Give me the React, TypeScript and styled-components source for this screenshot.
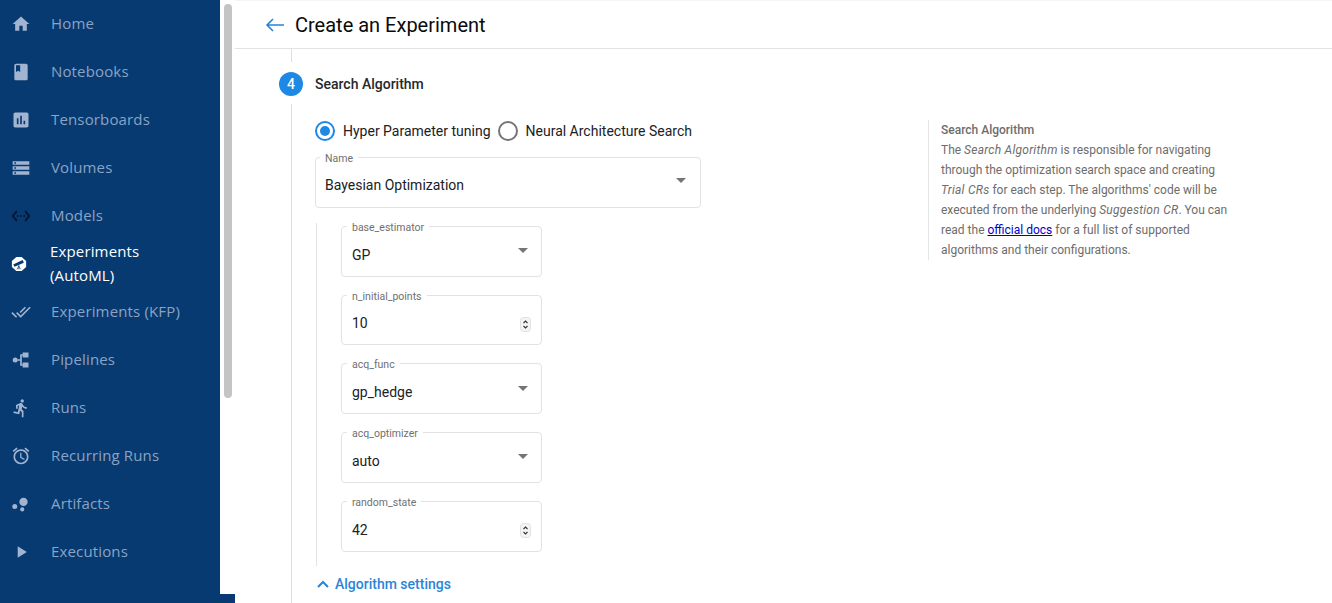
import React from "react";
import styled, { createGlobalStyle } from "styled-components";

const Global = createGlobalStyle`
  html, body { margin: 0; padding: 0; height: 603px; overflow: hidden; background: #fff; }
  #root { height: 603px; }
  * { box-sizing: border-box; }
`;

const Page = styled.div`
  display: grid;
  grid-template-columns: 220px 15px 1097px;
  grid-template-rows: 594px 9px;
  height: 603px;
  font-family: Roboto, "Liberation Sans", sans-serif;
`;

const Sidebar = styled.nav`
  grid-column: 1;
  grid-row: 1;
  background: #073a71;
  overflow: hidden;
  display: flex;
  flex-direction: column;
`;

const NavItem = styled.div<{ $active?: boolean }>`
  flex: none;
  height: 48px;
  display: flex;
  align-items: center;
  padding-left: 11px;
  gap: ${(p) => (p.$active ? "23px" : "20px")};
  font-family: "Open Sans", Roboto, sans-serif;
  font-size: 15px;
  font-weight: 500;
  line-height: 24px;
  letter-spacing: 0.15px;
  white-space: nowrap;
  color: ${(p) => (p.$active ? "#ffffff" : "#8ba3c4")};
`;

const NavLabel = styled.span`
  margin-top: -2px;
`;

const NavGlyph = styled.svg<{ $dark?: boolean }>`
  width: 20px;
  height: 20px;
  flex: none;
  fill: ${(p) => (p.$dark ? "#06122f" : "#a2b4cf")};
`;

const ActiveGlyph = styled.svg`
  width: 16px;
  height: 16px;
  flex: none;
`;

const ScrollTrack = styled.div`
  grid-column: 2;
  grid-row: 1;
  background: #fff;
  padding: 4px 3px 0 4px;
`;

const ScrollThumb = styled.div`
  height: 394px;
  background: #c4c4c4;
  border-radius: 4px;
`;

const Footer = styled.div`
  grid-column: 1 / 3;
  grid-row: 2;
  background: #073a71;
`;

const Main = styled.main`
  grid-column: 3;
  grid-row: 1 / 3;
  display: flex;
  flex-direction: column;
  min-width: 0;
  overflow: hidden;
`;

const Header = styled.header`
  flex: none;
  height: 49px;
  display: flex;
  align-items: center;
  gap: 10px;
  padding: 1px 0 0 30px;
  border-bottom: 1px solid #e3e3e3;
  border-top: 1px solid #f5f5f5;
`;

const BackArrow = styled.svg`
  width: 20px;
  height: 20px;
  fill: none;
  stroke: #2a83d8;
  stroke-width: 1.6;
`;

const Title = styled.h1`
  margin: 0;
  font-size: 20px;
  font-weight: 400;
  color: #0a0a0a;
  white-space: nowrap;
`;

const Step = styled.section`
  flex: 1;
  display: flex;
  padding-left: 44px;
  min-height: 0;
`;

const Rail = styled.div`
  flex: none;
  width: 24px;
  display: flex;
  flex-direction: column;
  align-items: center;
`;

const RailTop = styled.div`
  flex: none;
  width: 1px;
  height: 13px;
  background: #dedede;
  margin-bottom: 10px;
`;

const RailLine = styled.div`
  flex: 1;
  width: 1px;
  margin-top: 8px;
  background: #dedede;
`;

const StepNumber = styled.div`
  flex: none;
  width: 24px;
  height: 24px;
  border-radius: 50%;
  background: #1e88e5;
  color: #fff;
  font-size: 14px;
  font-weight: 500;
  display: flex;
  align-items: center;
  justify-content: center;
`;

const StepBody = styled.div`
  flex: 1;
  min-width: 0;
  margin-left: 12px;
  display: grid;
  grid-template-columns: 386px 300px;
  column-gap: 227px;
  align-content: start;
`;

const StepTitle = styled.h2`
  grid-column: 1 / 3;
  margin: 0;
  padding-top: 25px;
  height: 71px;
  font-size: 14px;
  line-height: 20px;
  font-weight: 500;
  color: #26282b;
`;

const FormColumn = styled.div`
  display: flex;
  flex-direction: column;
`;

const RadioRow = styled.div`
  display: flex;
  align-items: center;
  height: 22px;
  margin-bottom: 15px;
  white-space: nowrap;
`;

const RadioOption = styled.label`
  display: flex;
  align-items: center;
  gap: 8px;
  margin-right: 7px;
  font-size: 14px;
  color: #202124;
`;

const RadioMark = styled.span<{ $on?: boolean }>`
  flex: none;
  width: 20px;
  height: 20px;
  border-radius: 50%;
  border: 2px solid ${(p) => (p.$on ? "#1e88e5" : "#757575")};
  display: flex;
  align-items: center;
  justify-content: center;
  &::after {
    content: "";
    display: ${(p) => (p.$on ? "block" : "none")};
    width: 10px;
    height: 10px;
    border-radius: 50%;
    background: #1e88e5;
  }
`;

const Field = styled.div<{ $nested?: boolean }>`
  position: relative;
  flex: none;
  height: 50.75px;
  border: 1px solid #e2e2e2;
  border-radius: 4px;
  display: flex;
  align-items: center;
  justify-content: space-between;
  padding: ${(p) => (p.$nested ? "7px 10px 0 10px" : "5px 11px 0 9px")};
  font-size: 14px;
  color: #202124;
`;

const FieldLabel = styled.span<{ $nested?: boolean }>`
  position: absolute;
  left: ${(p) => (p.$nested ? "5px" : "4px")};
  top: -6px;
  padding: 0 5px;
  background: #fff;
  font-size: 10.5px;
  line-height: 13px;
  color: #6f6f6f;
`;

const Caret = styled.span`
  width: 0;
  height: 0;
  margin: -8px 3px 0 0;
  border-left: 5px solid transparent;
  border-right: 5px solid transparent;
  border-top: 5px solid #757575;
`;

const Spinner = styled.svg`
  width: 11px;
  height: 15px;
  margin: 2px 0 0 0;
  fill: none;
`;

const Nested = styled.div`
  margin: 15px 0 0 1px;
  border-left: 1px solid #e2e2e2;
  height: 343px;
  padding: 3px 0 0 24px;
  width: 226px;
  display: flex;
  flex-direction: column;
  gap: 18px;
`;

const Toggle = styled.div`
  display: flex;
  align-items: center;
  gap: 5px;
  margin-top: 9px;
  height: 18px;
  padding-left: 1px;
  font-size: 14px;
  font-weight: 500;
  color: #2a84d8;
`;

const Help = styled.aside`
  align-self: start;
  height: 140px;
  border-left: 1px solid #e4e4e4;
  padding-left: 12px;
  font-size: 12px;
  line-height: 20px;
  color: #6d6d6d;
  white-space: nowrap;
  em {
    letter-spacing: 0.25px;
  }
`;

const HelpTitle = styled.div`
  font-weight: 500;
`;

const DocLink = styled.a`
  color: #0000cc;
  text-decoration: underline;
`;

const icons: [string, string, boolean?][] = [
  ["Home", "M10 20v-6h4v6h5v-8h3L12 3 2 12h3v8z"],
  ["Notebooks", "M18 2H6c-1.1 0-2 .9-2 2v16c0 1.1.9 2 2 2h12c1.1 0 2-.9 2-2V4c0-1.1-.9-2-2-2zM6 4h5v8l-2.5-1.5L6 12V4z"],
  ["Tensorboards", "M19 3H5c-1.1 0-2 .9-2 2v14c0 1.1.9 2 2 2h14c1.1 0 2-.9 2-2V5c0-1.1-.9-2-2-2zM9 17H7v-7h2v7zm4 0h-2V7h2v10zm4 0h-2v-4h2v4z"],
  ["Volumes", "M2 20h20v-4H2v4zm2-3h2v2H4v-2zM2 4v4h20V4H2zm4 3H4V5h2v2zm-4 7h20v-4H2v4zm2-3h2v2H4v-2z"],
  ["Models", "M7.77 6.76L6.23 5.48.82 12l5.41 6.52 1.54-1.28L3.42 12l4.35-5.24zM7 13h2v-2H7v2zm10-2h-2v2h2v-2zm-6 2h2v-2h-2v2zm6.77-7.52l-1.54 1.28L20.58 12l-4.35 5.24 1.54 1.28L23.18 12l-5.41-6.52z", true],
];
const icons2: [string, string][] = [
  ["Experiments (KFP)", "M18 7l-1.41-1.41-6.34 6.34 1.41 1.41L18 7zm4.24-1.41L11.66 16.17 7.48 12l-1.41 1.41L11.66 19l12-12-1.42-1.41zM.41 13.41L6 19l1.41-1.41L1.83 12 .41 13.41z"],
  ["Pipelines", "M14 3h7v6h-7zM14 15h7v6h-7zM11 5h3v2h-1v10h1v2h-3v-6H8v-2h3zM2 12a3 3 0 1 0 6 0 3 3 0 0 0-6 0z"],
  ["Runs", "M13.49 5.48c1.1 0 2-.9 2-2s-.9-2-2-2-2 .9-2 2 .9 2 2 2zm-3.6 13.9l1-4.4 2.1 2v6h2v-7.5l-2.1-2 .6-3c1.3 1.5 3.3 2.5 5.5 2.5v-2c-1.9 0-3.5-1-4.3-2.4l-1-1.6c-.4-.6-1-1-1.7-1-.3 0-.5.1-.8.1l-5.2 2.2v4.7h2v-3.4l1.8-.7-1.6 8.1-4.9-1-.4 2 7 1.4z"],
  ["Recurring Runs", "M22 5.72l-4.6-3.86-1.29 1.53 4.6 3.86L22 5.72zM7.88 3.39L6.6 1.86 2 5.71l1.29 1.53 4.59-3.85zM12.5 8H11v6l4.75 2.85.75-1.23-4-2.37V8zM12 4c-4.97 0-9 4.03-9 9s4.02 9 9 9c4.97 0 9-4.03 9-9s-4.03-9-9-9zm0 16c-3.87 0-7-3.13-7-7s3.13-7 7-7 7 3.13 7 7-3.13 7-7 7z"],
  ["Artifacts", "M4.500 12a3 3 0 1 0 0 6 3 3 0 0 0 0-6zM15 4.500a5 5 0 1 0 0 10 5 5 0 0 0 0-10zM13.500 16a2.500 2.500 0 1 0 0 5 2.500 2.500 0 0 0 0-5z"],
  ["Executions", "M8 5v14l11-7z"],
];

const Nav = ({ label, d, dark }: { label: string; d: string; dark?: boolean }) => (
  <NavItem>
    <NavGlyph viewBox="0 0 24 24" $dark={dark}>
      <path d={d} />
    </NavGlyph>
    <NavLabel>{label}</NavLabel>
  </NavItem>
);

const Select = ({ label, value, nested }: { label: string; value: string; nested?: boolean }) => (
  <Field $nested={nested}>
    <FieldLabel $nested={nested}>{label}</FieldLabel>
    <span>{value}</span>
    <Caret />
  </Field>
);

const NumberInput = ({ label, value }: { label: string; value: string }) => (
  <Field $nested>
    <FieldLabel $nested>{label}</FieldLabel>
    <span>{value}</span>
    <Spinner viewBox="0 0 11 15">
      <rect x="0.5" y="0.5" width="10" height="14" rx="3" fill="#f4f4f4" stroke="#e0e0e0" />
      <path d="M3.500 6 5.500 4l2 2M3.500 9l2 2 2-2" stroke="#333" strokeWidth="1.1" />
    </Spinner>
  </Field>
);

export default function App() {
  return (
    <Page>
      <Global />
      <Sidebar>
        {icons.map(([l, d, dark]) => (
          <Nav key={l} label={l} d={d} dark={dark} />
        ))}
        <NavItem $active>
          <ActiveGlyph viewBox="0 0 18 18">
            <path d="M6 1h6l5 4.500v7L12 17H6l-5-4.500v-7z" fill="#fff" />
            <path d="M2.500 9.500 13 4.500l1.500 3L4 12z" fill="#073a71" />
            <path d="M8.800 9.500v2M8.800 11.500 6.800 15M8.800 11.500v3.500M8.800 11.500l2 3.500" stroke="#073a71" strokeWidth="0.8" fill="none" />
          </ActiveGlyph>
          <NavLabel>
            Experiments
            <br />
            (AutoML)
          </NavLabel>
        </NavItem>
        {icons2.map(([l, d]) => (
          <Nav key={l} label={l} d={d} />
        ))}
      </Sidebar>
      <ScrollTrack>
        <ScrollThumb />
      </ScrollTrack>
      <Main>
        <Header>
          <BackArrow viewBox="0 0 20 20">
            <path d="M19 10H2M8 4 2 10l6 6" />
          </BackArrow>
          <Title>Create an Experiment</Title>
        </Header>
        <Step>
          <Rail>
            <RailTop />
            <StepNumber>4</StepNumber>
            <RailLine />
          </Rail>
          <StepBody>
            <StepTitle>Search Algorithm</StepTitle>
            <FormColumn>
              <RadioRow>
                <RadioOption>
                  <RadioMark $on />
                  Hyper Parameter tuning
                </RadioOption>
                <RadioOption>
                  <RadioMark />
                  Neural Architecture Search
                </RadioOption>
              </RadioRow>
              <Select label="Name" value="Bayesian Optimization" />
              <Nested>
                <Select nested label="base_estimator" value="GP" />
                <NumberInput label="n_initial_points" value="10" />
                <Select nested label="acq_func" value="gp_hedge" />
                <Select nested label="acq_optimizer" value="auto" />
                <NumberInput label="random_state" value="42" />
              </Nested>
              <Toggle>
                <svg width="14" height="14" viewBox="0 0 14 14" fill="none" stroke="#2a84d8" strokeWidth="2">
                  <path d="M2 10l5-5 5 5" />
                </svg>
                Algorithm settings
              </Toggle>
            </FormColumn>
            <Help>
              <HelpTitle>Search Algorithm</HelpTitle>
              The <em>Search Algorithm</em> is responsible for navigating
              <br />
              through the optimization search space and creating
              <br />
              <em>Trial CRs</em> for each step. The algorithms' code will be
              <br />
              executed from the underlying <em>Suggestion CR</em>. You can
              <br />
              read the <DocLink href="#">official docs</DocLink> for a full list of supported
              <br />
              algorithms and their configurations.
            </Help>
          </StepBody>
        </Step>
      </Main>
      <Footer />
    </Page>
  );
}
